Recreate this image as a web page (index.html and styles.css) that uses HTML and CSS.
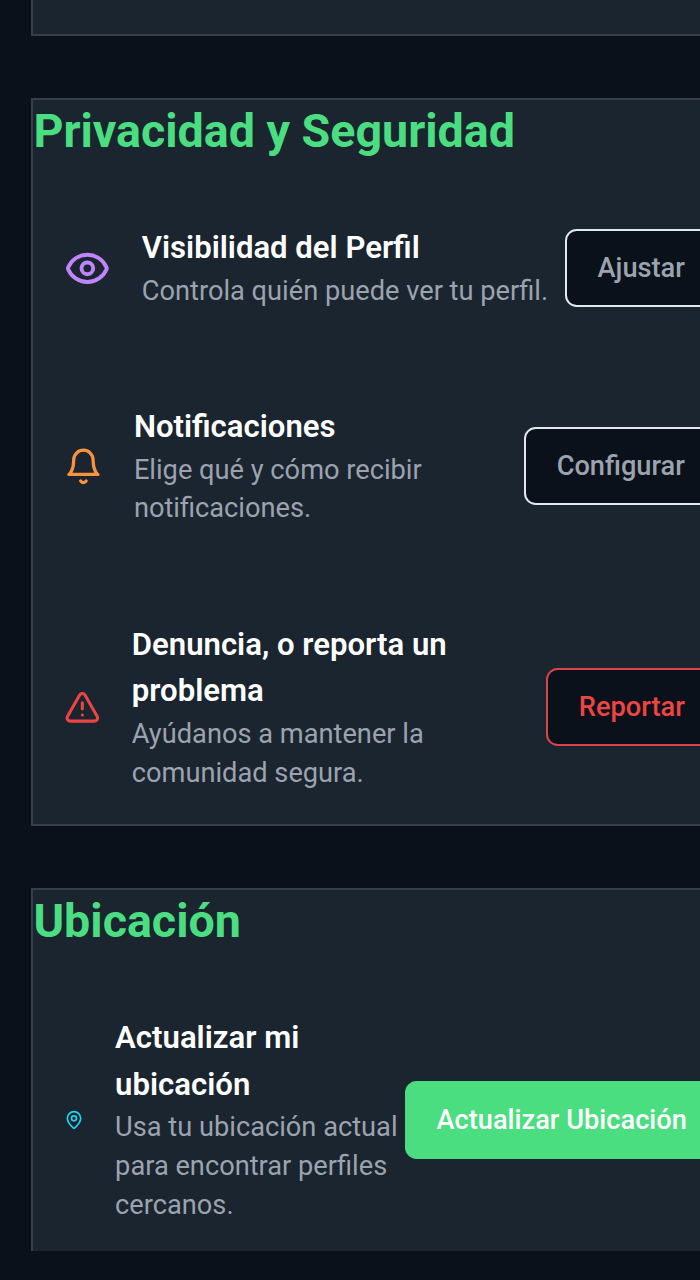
FILE: index.html
```html
<!DOCTYPE html>
<html lang="es">
<head>
<meta charset="utf-8">
<title>Ajustes</title>
<link rel="stylesheet" href="styles.css">
</head>
<body>
<main class="page">
  <section class="card card-previous"></section>

  <section class="card">
    <h2 class="card-title">Privacidad y Seguridad</h2>
    <div class="rows">
      <div class="row">
        <svg class="icon icon-eye" viewBox="0 0 24 24"><path d="M2.06 12.35a1 1 0 0 1 0-.7 10.75 10.75 0 0 1 19.88 0 1 1 0 0 1 0 .7 10.75 10.75 0 0 1-19.88 0"/><circle cx="12" cy="12" r="3"/></svg>
        <div class="text">
          <h3 class="name">Visibilidad del Perfil</h3>
          <p class="hint">Controla quién puede ver tu perfil.</p>
        </div>
        <button class="button">Ajustar</button>
      </div>
      <div class="row">
        <svg class="icon icon-bell" viewBox="0 0 24 24"><path d="M6 8a6 6 0 0 1 12 0c0 7 3 9 3 9H3s3-2 3-9"/><path d="M10.3 21a1.94 1.94 0 0 0 3.4 0"/></svg>
        <div class="text">
          <h3 class="name">Notificaciones</h3>
          <p class="hint">Elige qué y cómo recibir<br>notificaciones.</p>
        </div>
        <button class="button">Configurar</button>
      </div>
      <div class="row">
        <svg class="icon icon-alert" viewBox="0 0 24 24"><path d="m21.73 18-8-14a2 2 0 0 0-3.48 0l-8 14A2 2 0 0 0 4 21h16a2 2 0 0 0 1.73-3"/><path d="M12 9v4"/><path d="M12 17h.01"/></svg>
        <div class="text">
          <h3 class="name">Denuncia, o reporta un<br>problema</h3>
          <p class="hint">Ayúdanos a mantener la<br>comunidad segura.</p>
        </div>
        <button class="button button-danger">Reportar</button>
      </div>
    </div>
  </section>

  <section class="card">
    <h2 class="card-title">Ubicación</h2>
    <div class="rows">
      <div class="row">
        <svg class="icon icon-pin" viewBox="0 0 24 24"><path d="M20 10c0 4.99-5.54 10.19-7.4 11.8a1 1 0 0 1-1.2 0C9.54 20.19 4 14.99 4 10a8 8 0 0 1 16 0"/><circle cx="12" cy="10" r="3"/></svg>
        <div class="text">
          <h3 class="name">Actualizar mi<br>ubicación</h3>
          <p class="hint">Usa tu ubicación actual<br>para encontrar perfiles<br>cercanos.</p>
        </div>
        <button class="button button-primary">Actualizar Ubicación</button>
      </div>
    </div>
  </section>
</main>
</body>
</html>
```
FILE: styles.css
```css
* { box-sizing: border-box; margin: 0; }
html { background: #0b111a; overflow: hidden; }
body {
  height: 1251px;
  overflow: hidden;
  background: #0b111a;
  font-family: Roboto, "Liberation Sans", sans-serif;
}
.page {
  display: flex;
  flex-direction: column;
  gap: 62.4px;
  width: 751px;
  padding-left: 31px;
}
.card {
  flex: none;
  border: 2px solid #363e4a;
  background: #1b2430;
  background: #1b2530;
}
.card-previous { height: 36px; border-top: 0; }
.card-title {
  margin-bottom: 31.4px;
  padding-left: 0.4px;
  color: #4ade80;
  font-size: 46.6px;
  font-weight: 700;
  line-height: 62.2px;
}
.rows { display: flex; flex-direction: column; gap: 31.1px; }
.row {
  display: flex;
  align-items: center;
  padding: 31.1px;
}
.icon {
  flex: none;
  margin-right: 31px;
  fill: none;
  stroke: currentColor;
  stroke-width: 2;
  stroke-linecap: round;
  stroke-linejoin: round;
}
.icon-eye { width: 46.7px; height: 46.7px; color: #c084fc; }
.icon-bell { width: 38.8px; height: 38.8px; color: #fb923c; }
.icon-alert { width: 36.7px; height: 36.7px; color: #ef4444; }
.icon-pin { width: 20px; height: 20px; color: #22d3ee; }
.text { flex: 1; min-width: 0; white-space: nowrap; }
.name {
  color: #fff;
  font-size: 31.11px;
  font-weight: 600;
  line-height: 46.67px;
}
.hint {
  color: #9ca3af;
  font-size: 27.22px;
  line-height: 38.89px;
}
.button {
  flex: none;
  height: 77.8px;
  padding: 0 31px;
  border: 2px solid #e2e8f0;
  border-radius: 11.7px;
  background: #0b111a;
  color: #9ca3af;
  font-family: inherit;
  font-size: 27.22px;
  font-weight: 500;
  white-space: nowrap;
}
.button-danger { border-color: #d9434a; color: #ef4444; }
.button-primary { border: 0; background: #4ade80; color: #fff; }
```
